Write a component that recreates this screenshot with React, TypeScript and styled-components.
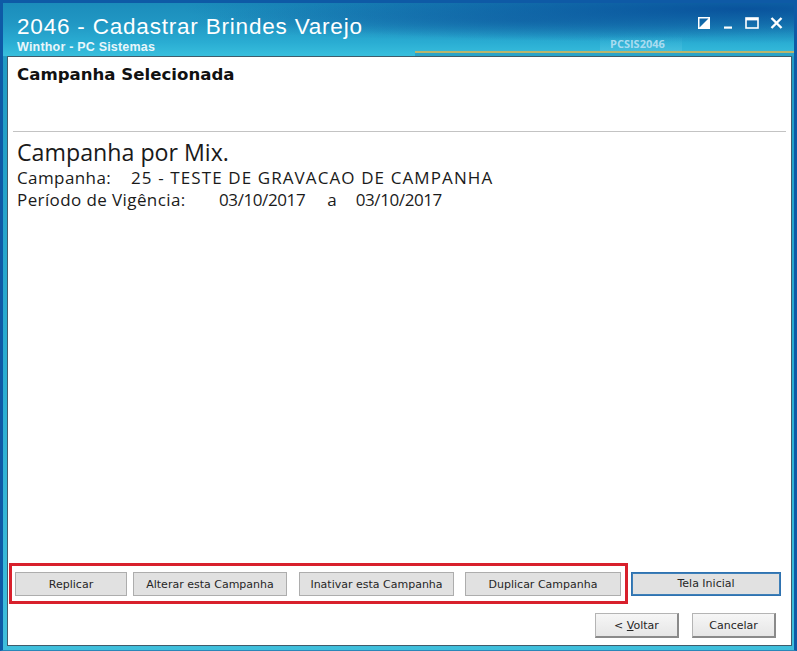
import React from "react";
import styled, { createGlobalStyle } from "styled-components";

const Global = createGlobalStyle`
  html, body { margin: 0; padding: 0; background: #ffffff; }
  body { width: 797px; height: 651px; overflow: hidden; }
  #root { width: 797px; height: 651px; }
`;

const Window = styled.div`
  width: 797px;
  height: 651px;
  box-sizing: border-box;
  display: flex;
  flex-direction: column;
  background: linear-gradient(180deg, #1f98c2 0%, #2aaed2 60%, #3fbfdc 100%);
  border-left: 3px solid #0e5aa6;
  border-top: 3px solid #0e5aa6;
  border-right: 3px solid #0e5aa6;
  border-bottom: 1px solid #2a87b8;
`;

const TitleBar = styled.div`
  position: relative;
  height: 53px;
  flex: none;
  display: flex;
  align-items: flex-start;
  justify-content: space-between;
  background:
    radial-gradient(ellipse 560px 34px at 740px 6px, rgba(8, 80, 155, 0.95) 0%, rgba(8, 80, 155, 0.0) 100%),
    radial-gradient(ellipse 340px 20px at 520px 18px, rgba(20, 100, 165, 0.55) 0%, rgba(20, 100, 165, 0) 100%),
    linear-gradient(180deg, #1b8cbb 0%, #2198c4 40%, #2aadd3 75%, #38bfdd 100%);
`;

const TitleTexts = styled.div`
  display: flex;
  flex-direction: column;
  padding: 12px 0 0 14px;
`;

const Title = styled.div`
  font-family: "Liberation Sans", Arial, sans-serif;
  font-size: 22.5px;
  line-height: 24px;
  letter-spacing: 0.8px;
  color: #ffffff;
`;

const Subtitle = styled.div`
  font-family: "Liberation Sans", Arial, sans-serif;
  font-weight: bold;
  font-size: 12.5px;
  line-height: 14px;
  letter-spacing: 0.2px;
  color: #e9f6fb;
  margin-top: 1px;
`;

const Controls = styled.div`
  display: flex;
  align-items: center;
  padding: 13px 6px 0 0;
`;

const Ctrl = styled.div`
  width: 24px;
  height: 14px;
  display: flex;
  align-items: center;
  justify-content: center;
`;

const Strip = styled.div`
  position: absolute;
  left: 412px;
  right: 0;
  bottom: 0;
  height: 5px;
  border-top: 2px solid #b9b56c;
  background: #2aa3c8;
  box-sizing: border-box;
`;

const Tab = styled.div`
  position: absolute;
  left: 597px;
  bottom: 5px;
  width: 82px;
  height: 15px;
  box-sizing: border-box;
  font-family: "Open Sans", "Segoe UI", sans-serif;
  font-weight: bold;
  font-size: 11px;
  line-height: 15px;
  color: #a9dcf0;
  padding-left: 10px;
  background: linear-gradient(180deg, rgba(120, 210, 235, 0.0) 0%, rgba(120, 210, 235, 0.25) 100%);
`;

const Content = styled.div`
  flex: 1;
  margin: 0 2px 4px 4px;
  background: #ffffff;
  border: 1px solid #3f5c6b;
  display: flex;
  flex-direction: column;
  min-height: 0;
`;

const Header = styled.div`
  height: 75px;
  flex: none;
  margin: 0 5px;
  border-bottom: 1px solid #c3c3c3;
  padding: 8px 4px 0 4px;
  box-sizing: border-box;
`;

const HeaderText = styled.div`
  font-family: "DejaVu Sans", Tahoma, sans-serif;
  font-weight: bold;
  font-size: 16.6px;
  line-height: 20px;
  color: #111111;
`;

const Info = styled.div`
  padding: 6px 0 0 9px;
  font-family: "Open Sans", "Segoe UI", sans-serif;
  color: #1a1a1a;
`;

const BigTitle = styled.div`
  font-size: 23.2px;
  line-height: 29px;
`;

const InfoLine = styled.div`
  font-size: 17px;
  line-height: 22px;
  display: flex;
  white-space: pre;
`;

const Label = styled.span<{ $w: number }>`
  display: inline-block;
  width: ${(p) => p.$w}px;
  letter-spacing: 0.4px;
`;

const Value = styled.span<{ $ls: number }>`
  letter-spacing: ${(p) => p.$ls}px;
`;

const Gap = styled.span<{ $w: number }>`
  display: inline-block;
  width: ${(p) => p.$w}px;
`;

const Spacer = styled.div`
  flex: 1;
`;

const ActionRow = styled.div`
  display: flex;
  align-items: center;
  padding: 0 4px 0 1px;
  gap: 3px;
`;

const Highlight = styled.div`
  display: flex;
  align-items: center;
  border: 3px solid #d8202c;
  padding: 6px 4px 5px 3px;
`;

const Button = styled.button<{ $w: number; $ml?: number; $focused?: boolean }>`
  width: ${(p) => p.$w}px;
  margin: 0 0 0 ${(p) => p.$ml ?? 0}px;
  height: 24px;
  box-sizing: border-box;
  background: #e1e1e1;
  border: 1px solid ${(p) => (p.$focused ? "#2f72b0" : "#adadad")};
  box-shadow: ${(p) => (p.$focused ? "inset 0 0 0 1px #3d7fb8" : "none")};
  font-family: "DejaVu Sans", Tahoma, sans-serif;
  font-size: 11px;
  color: #262626;
  padding: 0;
  cursor: default;
`;

const FooterRow = styled.div`
  display: flex;
  justify-content: flex-end;
  gap: 13px;
  padding: 9px 15px 7px 0;
`;

const FooterButton = styled.button`
  width: 84px;
  height: 25px;
  box-sizing: border-box;
  background: linear-gradient(180deg, #f6f6f6 0%, #e6e6e6 100%);
  border: 1px solid #b4b4b4;
  border-right: 2px solid #8a8a8a;
  border-bottom: 2px solid #8a8a8a;
  font-family: "DejaVu Sans", Tahoma, sans-serif;
  font-size: 11px;
  color: #262626;
  padding: 0;
  cursor: default;
`;

const Underline = styled.span`
  text-decoration: underline;
`;

export default function App() {
  return (
    <>
      <Global />
      <Window>
        <TitleBar>
          <TitleTexts>
            <Title>2046 - Cadastrar Brindes Varejo</Title>
            <Subtitle>Winthor - PC Sistemas</Subtitle>
          </TitleTexts>
          <Controls>
            <Ctrl>
              <svg width="12" height="12" viewBox="0 0 12 12">
                <rect x="0.75" y="0.75" width="10.5" height="10.5" fill="none" stroke="#fff" strokeWidth="1.5" />
                <polygon points="0,12 12,0 12,12" fill="#fff" />
              </svg>
            </Ctrl>
            <Ctrl>
              <svg width="12" height="12" viewBox="0 0 12 12">
                <rect x="2" y="9.5" width="8" height="2.2" fill="#fff" />
              </svg>
            </Ctrl>
            <Ctrl>
              <svg width="14" height="12" viewBox="0 0 14 12">
                <rect x="1" y="1" width="12" height="10" fill="none" stroke="#fff" strokeWidth="1.6" />
                <rect x="1" y="1" width="12" height="2.4" fill="#fff" />
              </svg>
            </Ctrl>
            <Ctrl>
              <svg width="13" height="12" viewBox="0 0 13 12">
                <path d="M1.5 1 L11.5 11 M11.5 1 L1.5 11" stroke="#fff" strokeWidth="2.4" />
              </svg>
            </Ctrl>
          </Controls>
          <Strip />
          <Tab>PCSIS2046</Tab>
        </TitleBar>
        <Content>
          <Header>
            <HeaderText>Campanha Selecionada</HeaderText>
          </Header>
          <Info>
            <BigTitle>Campanha por Mix.</BigTitle>
            <InfoLine>
              <Label $w={114}>Campanha:</Label>
              <Value $ls={1.1}>25 - TESTE DE GRAVACAO DE CAMPANHA</Value>
            </InfoLine>
            <InfoLine>
              <Label $w={202}>Período de Vigência:</Label>
              <Value $ls={-0.4}>03/10/2017</Value>
              <Gap $w={22} />
              <span>a</span>
              <Gap $w={19} />
              <Value $ls={-0.4}>03/10/2017</Value>
            </InfoLine>
          </Info>
          <Spacer />
          <ActionRow>
            <Highlight>
              <Button $w={112}>Replicar</Button>
              <Button $w={154} $ml={6}>Alterar esta Campanha</Button>
              <Button $w={155} $ml={12}>Inativar esta Campanha</Button>
              <Button $w={156} $ml={11}>Duplicar Campanha</Button>
            </Highlight>
            <Button $w={150} $focused>Tela Inicial</Button>
          </ActionRow>
          <FooterRow>
            <FooterButton>
              &lt; <Underline>V</Underline>oltar
            </FooterButton>
            <FooterButton>Cancelar</FooterButton>
          </FooterRow>
        </Content>
      </Window>
    </>
  );
}
